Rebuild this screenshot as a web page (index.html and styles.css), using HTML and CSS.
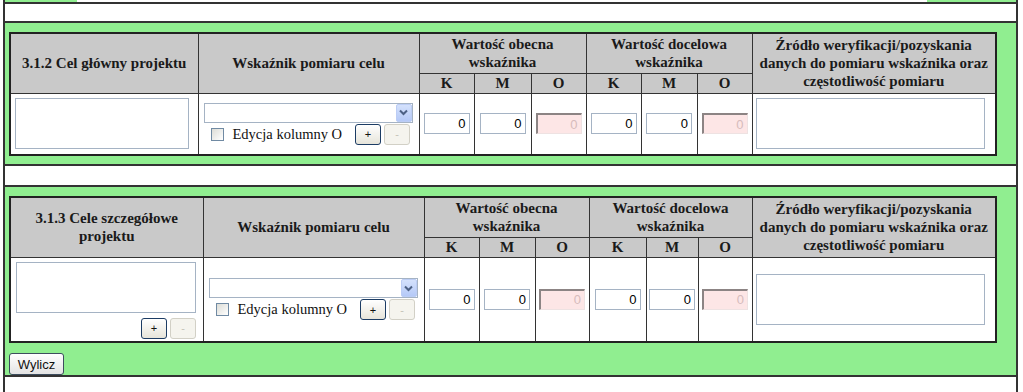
FILE: index.html
```html
<!DOCTYPE html>
<html lang="pl">
<head>
  <meta charset="UTF-8">
  <meta name="viewport" content="width=device-width, initial-scale=1.0">
  <title>Cele projektu</title>
  <link rel="stylesheet" href="styles.css">
</head>
<body>
  <div class="frame">
    <div class="strip"><div class="strip-box"></div></div>
    <div class="blank blank-first"></div>

    <div class="section section-main">
      <table class="grid">
        <colgroup>
          <col style="width:188px"><col style="width:221px">
          <col style="width:55px"><col style="width:57px"><col style="width:55px">
          <col style="width:55px"><col style="width:56px"><col style="width:55px">
          <col style="width:244px">
        </colgroup>
        <tr class="head-top">
          <th rowspan="2">3.1.2 Cel główny projektu</th>
          <th rowspan="2">Wskaźnik pomiaru celu</th>
          <th colspan="3">Wartość obecna<br>wskaźnika</th>
          <th colspan="3">Wartość docelowa<br>wskaźnika</th>
          <th rowspan="2">Źródło weryfikacji/pozyskania<br>danych do pomiaru wskaźnika oraz<br>częstotliwość pomiaru</th>
        </tr>
        <tr class="head-sub">
          <th>K</th><th>M</th><th>O</th><th>K</th><th>M</th><th>O</th>
        </tr>
        <tr class="row-data">
          <td class="cell-goal"><textarea class="ta ta-goal"></textarea></td>
          <td class="cell-ind">
            <div class="select-wrap">
              <select class="sel"></select>
              <span class="sel-arrow"><svg width="9" height="7" viewBox="0 0 9 7"><path d="M1 1.5 L4.5 5 L8 1.5" fill="none" stroke="#4d6185" stroke-width="2"/></svg></span>
            </div>
            <div class="ind-opts">
              <label class="chk"><input type="checkbox"> Edycja kolumny O</label>
              <button class="btn-sm">+</button>
              <button class="btn-sm" disabled>-</button>
            </div>
          </td>
          <td class="cell-num"><input class="num" value="0"></td>
          <td class="cell-num"><input class="num" value="0"></td>
          <td class="cell-num"><input class="num" value="0" disabled></td>
          <td class="cell-num"><input class="num" value="0"></td>
          <td class="cell-num"><input class="num" value="0"></td>
          <td class="cell-num"><input class="num" value="0" disabled></td>
          <td class="cell-src"><textarea class="ta ta-src"></textarea></td>
        </tr>
      </table>
    </div>

    <div class="blank blank-mid"></div>

    <div class="section section-spec">
      <table class="grid">
        <colgroup>
          <col style="width:193px"><col style="width:221px">
          <col style="width:55px"><col style="width:56px"><col style="width:54px">
          <col style="width:57px"><col style="width:52px"><col style="width:54px">
          <col style="width:244px">
        </colgroup>
        <tr class="head-top">
          <th rowspan="2">3.1.3 Cele szczegółowe<br>projektu</th>
          <th rowspan="2">Wskaźnik pomiaru celu</th>
          <th colspan="3">Wartość obecna<br>wskaźnika</th>
          <th colspan="3">Wartość docelowa<br>wskaźnika</th>
          <th rowspan="2">Źródło weryfikacji/pozyskania<br>danych do pomiaru wskaźnika oraz<br>częstotliwość pomiaru</th>
        </tr>
        <tr class="head-sub">
          <th>K</th><th>M</th><th>O</th><th>K</th><th>M</th><th>O</th>
        </tr>
        <tr class="row-data row-tall">
          <td class="cell-goal cell-goal-list">
            <textarea class="ta ta-goal-wide"></textarea>
            <div class="goal-btns">
              <button class="btn-sm">+</button>
              <button class="btn-sm" disabled>-</button>
            </div>
          </td>
          <td class="cell-ind">
            <div class="select-wrap">
              <select class="sel"></select>
              <span class="sel-arrow"><svg width="9" height="7" viewBox="0 0 9 7"><path d="M1 1.5 L4.5 5 L8 1.5" fill="none" stroke="#4d6185" stroke-width="2"/></svg></span>
            </div>
            <div class="ind-opts">
              <label class="chk"><input type="checkbox"> Edycja kolumny O</label>
              <button class="btn-sm">+</button>
              <button class="btn-sm" disabled>-</button>
            </div>
          </td>
          <td class="cell-num"><input class="num" value="0"></td>
          <td class="cell-num"><input class="num" value="0"></td>
          <td class="cell-num"><input class="num" value="0" disabled></td>
          <td class="cell-num"><input class="num" value="0"></td>
          <td class="cell-num"><input class="num" value="0"></td>
          <td class="cell-num"><input class="num" value="0" disabled></td>
          <td class="cell-src"><textarea class="ta ta-src"></textarea></td>
        </tr>
      </table>
      <button class="btn-calc">Wylicz</button>
    </div>

    <div class="blank blank-end"></div>
  </div>
</body>
</html>
```

FILE: styles.css
```css
body {
  margin: 0;
  background: #fff;
  font-family: 'Liberation Serif', 'Times New Roman', serif;
  color: #111;
}

.frame {
  margin-left: 3px;
  width: 1015px;
  box-sizing: border-box;
  border-left: 2px solid #333;
  border-right: 2px solid #333;
}

.strip {
  height: 2px;
  background: #90ee90;
  border-bottom: 2px solid #333;
}

.strip-box {
  margin-left: 72px;
  width: 850px;
  height: 2px;
  background: #fff;
}

.blank {
  background: #fff;
  border-bottom: 2px solid #333;
}

.blank-first { height: 17px; }
.blank-mid { height: 19px; }
.blank-end { height: 20px; border-bottom: none; }

.section {
  background: #90ee90;
  padding: 9px 0 0 4px;
  border-bottom: 2px solid #333;
}

.section-main { padding-bottom: 8px; }

.grid {
  border-collapse: collapse;
  table-layout: fixed;
  width: 988px;
  background: #fff;
  border: 2px solid #222;
}

.grid th,
.grid td {
  border: 1px solid #333;
  padding: 0;
}

.grid th {
  background: #c9c9c9;
  font-size: 15px;
  line-height: 18px;
  font-weight: bold;
  color: #1a1a1a;
  text-align: center;
}

.head-top { height: 40px; }
.head-sub { height: 20px; }

.row-data { height: 62px; }
.row-tall { height: 85px; }

.row-data td { vertical-align: middle; }

.grid .cell-goal { padding: 0 4px; }

.grid .cell-goal-list { padding: 2px 6px 0 5px; }

.ta {
  display: block;
  box-sizing: border-box;
  height: 51px;
  margin: 0;
  border: 1px solid #a5b3c4;
  resize: none;
  background: #fff;
}

.ta-goal { width: 174px; }
.ta-goal-wide { width: 180px; }

.goal-btns {
  display: flex;
  justify-content: flex-end;
  gap: 3px;
  margin-top: 5px;
  width: 180px;
}

.grid .cell-ind { padding: 0 5px; }

.select-wrap {
  position: relative;
  width: 209px;
  height: 20px;
}

.sel {
  appearance: none;
  -webkit-appearance: none;
  display: block;
  box-sizing: border-box;
  width: 100%;
  height: 20px;
  margin: 0;
  border: 1px solid #a5b3c4;
  border-radius: 0;
  background: #fff;
}

.sel-arrow {
  position: absolute;
  top: 1px;
  right: 1px;
  width: 16px;
  height: 18px;
  box-sizing: border-box;
  border: 1px solid #bccdf5;
  border-radius: 2px;
  background: linear-gradient(#d4e1fc, #b5c9f7);
  display: flex;
  align-items: center;
  justify-content: center;
}

.ind-opts {
  display: flex;
  align-items: center;
  margin-top: 1px;
  height: 21px;
}

.chk {
  display: flex;
  align-items: center;
  flex-shrink: 0;
  white-space: nowrap;
  font-size: 14.5px;
  margin-left: 7px;
  margin-right: 13px;
  color: #111;
}

.chk input {
  appearance: none;
  -webkit-appearance: none;
  flex-shrink: 0;
  width: 13px;
  height: 13px;
  margin: 0 9px 0 0;
  border: 1px solid #708aa3;
  background: linear-gradient(135deg, #dcdcd6, #fff);
}

.btn-sm {
  flex-shrink: 0;
  width: 26px;
  height: 21px;
  padding: 0;
  margin-right: 3px;
  border: 1px solid #1c3c64;
  border-radius: 3px;
  background: linear-gradient(#fff, #e6e4da);
  font-family: 'Liberation Sans', Arial, sans-serif;
  font-size: 11px;
  color: #111;
}

.btn-sm:disabled {
  border-color: #d2d0c6;
  background: #f5f4ee;
  color: #c4c2b8;
}

.goal-btns .btn-sm { margin-right: 0; }

.cell-num { text-align: center; }

.num {
  box-sizing: border-box;
  width: 46px;
  height: 21px;
  margin: 0;
  padding: 0 3px;
  border: 1px solid #a5b3c4;
  text-align: right;
  font-family: 'Liberation Sans', Arial, sans-serif;
  font-size: 13px;
  color: #000;
  background: #fff;
}

.num:disabled {
  background: #fde6e6;
  color: #d6bcbc;
  border-color: #8c8484 #eee2e2 #eee2e2 #8c8484;
  border-width: 2px 1px 1px 2px;
}

.grid .cell-src { padding: 0 11px 0 3px; }

.ta-src { width: 229px; }

.btn-calc {
  display: block;
  margin-top: 10px;
  width: 55px;
  height: 22px;
  padding: 0;
  border: 1px solid #3d4d5e;
  border-radius: 3px;
  background: linear-gradient(#fff, #e3e3e3);
  font-family: 'Liberation Sans', Arial, sans-serif;
  font-size: 13px;
  color: #111;
}
```
